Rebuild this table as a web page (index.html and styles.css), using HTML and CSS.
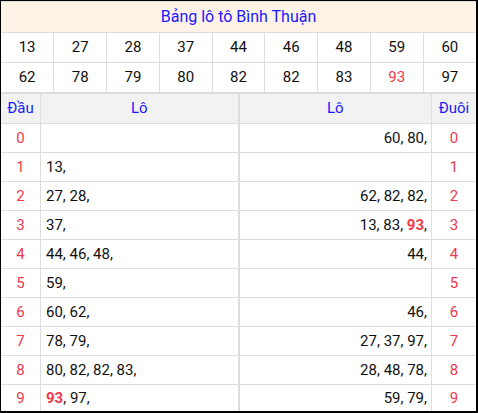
FILE: index.html
```html
<!DOCTYPE html>
<html lang="vi">
<head>
    <meta charset="UTF-8">
    <meta name="viewport" content="width=device-width, initial-scale=1.0">
    <title>Bảng lô tô Bình Thuận</title>
    <link rel="stylesheet" href="styles.css">
</head>
<body>
    <div class="box">
        <table class="kq">
            <tr class="title">
                <td colspan="9">Bảng lô tô Bình Thuận</td>
            </tr>
            <tr class="nums">
                <td>13</td><td>27</td><td>28</td><td>37</td><td>44</td><td>46</td><td>48</td><td>59</td><td>60</td>
            </tr>
            <tr class="nums">
                <td>62</td><td>78</td><td>79</td><td>80</td><td>82</td><td>82</td><td>83</td><td class="hot">93</td><td>97</td>
            </tr>
        </table>

        <div class="lower">
            <!-- Đầu -->
            <table class="loto head-side">
                <tr><th class="key">Đầu</th><th>Lô</th></tr>
                <tr><td class="key">0</td><td></td></tr>
                <tr><td class="key">1</td><td>13,</td></tr>
                <tr><td class="key">2</td><td>27, 28,</td></tr>
                <tr><td class="key">3</td><td>37,</td></tr>
                <tr><td class="key">4</td><td>44, 46, 48,</td></tr>
                <tr><td class="key">5</td><td>59,</td></tr>
                <tr><td class="key">6</td><td>60, 62,</td></tr>
                <tr><td class="key">7</td><td>78, 79,</td></tr>
                <tr><td class="key">8</td><td>80, 82, 82, 83,</td></tr>
                <tr><td class="key">9</td><td><b>93</b>, 97,</td></tr>
            </table>

            <!-- Đuôi -->
            <table class="loto tail-side">
                <tr><th>Lô</th><th class="key">Đuôi</th></tr>
                <tr><td>60, 80,</td><td class="key">0</td></tr>
                <tr><td></td><td class="key">1</td></tr>
                <tr><td>62, 82, 82,</td><td class="key">2</td></tr>
                <tr><td>13, 83, <b>93</b>,</td><td class="key">3</td></tr>
                <tr><td>44,</td><td class="key">4</td></tr>
                <tr><td></td><td class="key">5</td></tr>
                <tr><td>46,</td><td class="key">6</td></tr>
                <tr><td>27, 37, 97,</td><td class="key">7</td></tr>
                <tr><td>28, 48, 78,</td><td class="key">8</td></tr>
                <tr><td>59, 79,</td><td class="key">9</td></tr>
            </table>
        </div>
    </div>
</body>
</html>
```

FILE: styles.css
```css
/* Base */
body {
    margin: 0;
    font-family: Roboto, "Liberation Sans", Arial, sans-serif;
    color: #111;
    background: #fff;
}

.box {
    border: 1px solid #000;
    border-right-width: 2px;
    border-bottom-width: 2px;
}

table {
    width: 100%;
    border-collapse: collapse;
    table-layout: fixed;
}

td, th {
    border: 1px solid #ddd;
    padding: 0;
    font-size: 15px;
    font-weight: normal;
}

/* Result table */
.title td {
    line-height: 30px;
    background: #fff2e6;
    color: #1a1aff;
    font-size: 16px;
    text-align: center;
}

.nums td {
    line-height: 29px;
    text-align: center;
}

.kq tr td:first-child {
    border-left: none;
}

.kq tr td:last-child {
    border-right: none;
}

.kq tr:last-child td {
    border-bottom: none;
}

.hot {
    color: #f0394a;
}

/* Lô tô tables */
.lower {
    display: flex;
    align-items: flex-start;
}

.loto {
    width: 50%;
}

.loto th {
    line-height: 29px;
    background: #f2f2f2;
    color: #1a1aff;
    border-top-width: 2px;
}

.loto td {
    line-height: 28px;
}

.loto tr:last-child td {
    line-height: 26px;
    border-bottom: none;
}

.loto b {
    color: #f0394a;
}

.loto .key {
    width: 39px;
    text-align: center;
}

.loto td.key {
    color: #f0394a;
}

.head-side td {
    padding-left: 5px;
}

.head-side td.key {
    padding-left: 0;
}

.head-side tr :first-child {
    border-left: none;
}

.tail-side td {
    text-align: right;
    padding-right: 4px;
}

.tail-side td.key {
    padding-right: 0;
    text-align: center;
}

.tail-side .key {
    width: 44px;
}

.tail-side tr :last-child {
    border-right: none;
}
```
